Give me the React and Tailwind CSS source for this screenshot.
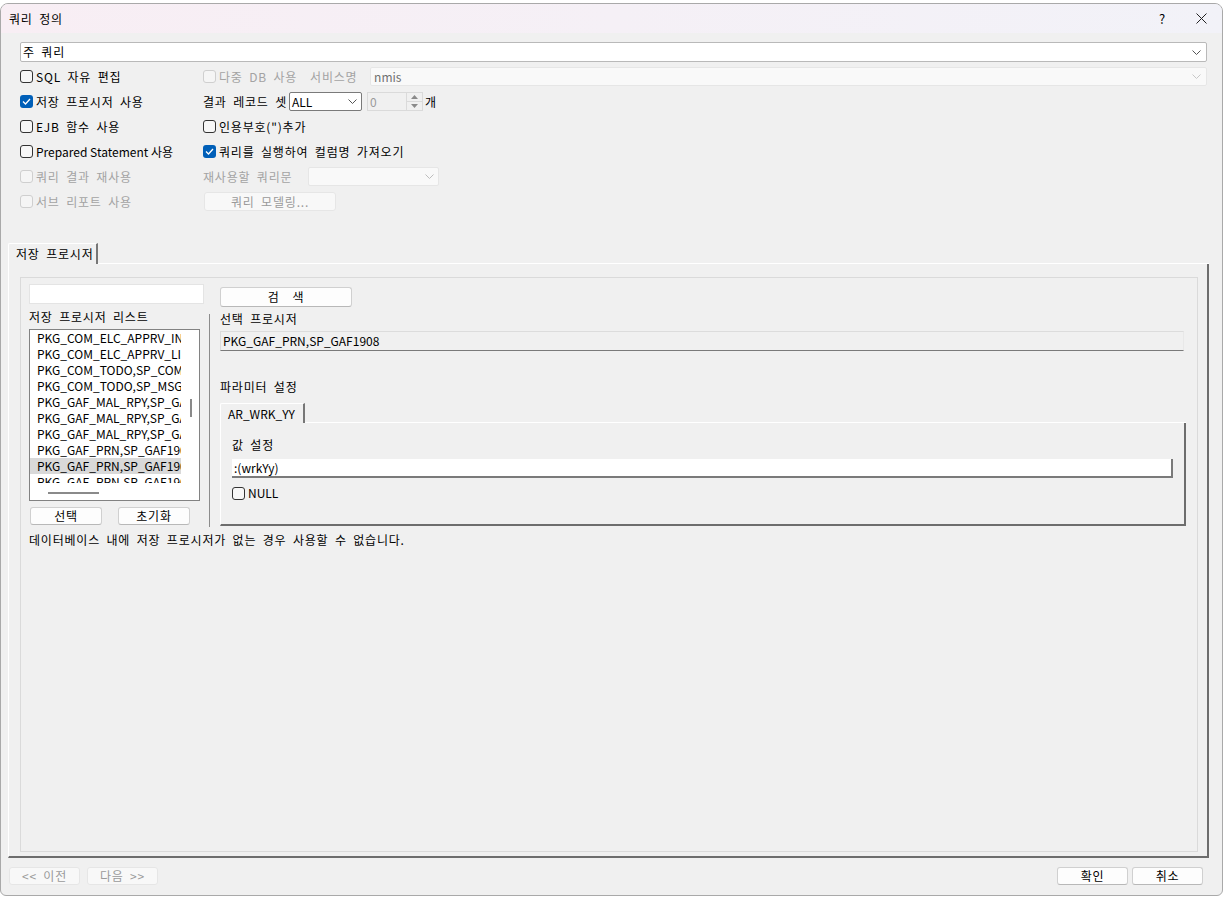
import React from "react";

const FONT = { fontFamily: '"Noto Sans CJK KR", "Noto Sans", sans-serif' };
// Korean labels in the reference are set wider than Noto's default metrics
const KO = "tracking-[0.8px] [word-spacing:3px]";

const PROCS = [
  "PKG_COM_ELC_APPRV_INFO",
  "PKG_COM_ELC_APPRV_LINE",
  "PKG_COM_TODO,SP_COM_TODO",
  "PKG_COM_TODO,SP_MSG_SEND",
  "PKG_GAF_MAL_RPY,SP_GAF1101",
  "PKG_GAF_MAL_RPY,SP_GAF1102",
  "PKG_GAF_MAL_RPY,SP_GAF1103",
  "PKG_GAF_PRN,SP_GAF1907",
  "PKG_GAF_PRN,SP_GAF1908",
  "PKG_GAF_PRN,SP_GAF1909",
];

function Chevron({ className = "" }) {
  return (
    <svg width="9" height="5" viewBox="0 0 9 5" className={className}>
      <path d="M0.5 0.5 L4.5 4.5 L8.5 0.5" fill="none" stroke="currentColor" strokeWidth="1" />
    </svg>
  );
}

function Check({ checked, disabled }) {
  if (checked) {
    return (
      <span className="w-[13px] h-[13px] rounded-[3px] bg-[#005fb8] flex items-center justify-center shrink-0">
        <svg width="9" height="7" viewBox="0 0 9 7">
          <path d="M1 3.5 L3.5 6 L8 1" fill="none" stroke="#fff" strokeWidth="1.3" />
        </svg>
      </span>
    );
  }
  return (
    <span
      className={
        "w-[13px] h-[13px] rounded-[3px] border shrink-0 " +
        (disabled ? "border-[#cfcfcf] bg-[#f5f5f5]" : "border-[#333] bg-[#f7f7f7]")
      }
    />
  );
}

function CheckLabel({ checked, disabled, ko, children }) {
  return (
    <label className={"flex items-center gap-[3px] " + (disabled ? "text-[#a3a3a3]" : "text-black")}>
      <Check checked={checked} disabled={disabled} />
      <span className={ko ? KO : ""}>{children}</span>
    </label>
  );
}

function Btn({ children, disabled, className = "" }) {
  return (
    <button
      type="button"
      className={
        "h-[18px] rounded-[3px] border flex items-center justify-center leading-none " +
        KO +
        " " +
        (disabled
          ? "bg-[#f8f8f8] border-[#e6e6e6] text-[#9a9a9a] "
          : "bg-[#fdfdfd] border-[#d0d0d0] border-b-[#b8b8b8] text-black ") +
        className
      }
    >
      {children}
    </button>
  );
}

export default function App() {
  return (
    <div className="w-[1225px] h-[897px] bg-white text-[12px] leading-[16px]" style={FONT}>
      <div className="mt-[3px] w-[1223px] h-[893px] border border-[#a9a9a9] rounded-t-[8px] rounded-b-[6px] overflow-hidden bg-[#f0f0f0] flex flex-col">
        {/* title bar */}
        <div className="h-[29px] shrink-0 flex items-center pl-[8px] bg-gradient-to-r from-[#f8eef4] to-[#f2f2f8]">
          <span className={"flex-1 text-[12px] text-black " + KO}>쿼리 정의</span>
          <span className="w-[20px] text-center text-[13px] mr-[24px]">?</span>
          <svg width="11" height="11" viewBox="0 0 11 11" className="mr-[15px]">
            <path d="M0.5 0.5 L10.5 10.5 M10.5 0.5 L0.5 10.5" stroke="#222" strokeWidth="1" />
          </svg>
        </div>

        {/* options */}
        <div className="pl-[19px] pr-[15px] pt-[9px]">
          <div className="h-[20px] bg-white border border-[#b9b9b9] rounded-[2px] flex items-center pl-[2px] pr-[5px]">
            <span className={"flex-1 " + KO}>주 쿼리</span>
            <Chevron className="text-[#555]" />
          </div>

          <div className="mt-[2px] flex flex-col">
            <div className="h-[25px] flex items-center">
              <div className="w-[183px]"><CheckLabel ko>SQL 자유 편집</CheckLabel></div>
              <CheckLabel disabled ko>다중 DB 사용</CheckLabel>
              <span className={"ml-[13px] w-[60px] text-[#a3a3a3] " + KO}>서비스명</span>
              <div className="flex-1 h-[19px] bg-[#f9f9f9] border border-[#e6e6e6] rounded-[2px] flex items-center pl-[3px] pr-[5px] text-[#707070]">
                <span className="flex-1">nmis</span>
                <Chevron className="text-[#c8c8c8]" />
              </div>
            </div>

            <div className="h-[25px] flex items-center">
              <div className="w-[183px]"><CheckLabel checked ko>저장 프로시저 사용</CheckLabel></div>
              <span className={"w-[86px] whitespace-nowrap " + KO}>결과 레코드 셋</span>
              <div className="w-[73px] h-[19px] bg-white border border-[#7a7a7a] rounded-[2px] flex items-center pl-[2px] pr-[4px]">
                <span className="flex-1">ALL</span>
                <Chevron className="text-[#555]" />
              </div>
              <div className="ml-[5px] w-[56px] h-[19px] bg-[#f0f0f0] border border-[#dadada] flex items-center text-[#9a9a9a]">
                <span className="flex-1 pl-[2px]">0</span>
                <div className="w-[16px] h-full border-l border-[#dadada] flex flex-col">
                  <div className="flex-1 flex items-center justify-center border-b border-[#dadada]">
                    <svg width="7" height="4" viewBox="0 0 7 4"><path d="M0 4 L3.5 0 L7 4Z" fill="#8a8a8a" /></svg>
                  </div>
                  <div className="flex-1 flex items-center justify-center">
                    <svg width="7" height="4" viewBox="0 0 7 4"><path d="M0 0 L3.5 4 L7 0Z" fill="#8a8a8a" /></svg>
                  </div>
                </div>
              </div>
              <span className="ml-[2px]">개</span>
            </div>

            <div className="h-[25px] flex items-center">
              <div className="w-[183px]"><CheckLabel ko>EJB 함수 사용</CheckLabel></div>
              <CheckLabel ko>인용부호(")추가</CheckLabel>
            </div>

            <div className="h-[25px] flex items-center">
              <div className="w-[183px]"><CheckLabel>Prepared Statement 사용</CheckLabel></div>
              <CheckLabel checked ko>쿼리를 실행하여 컬럼명 가져오기</CheckLabel>
            </div>

            <div className="h-[25px] flex items-center">
              <div className="w-[183px]"><CheckLabel disabled ko>쿼리 결과 재사용</CheckLabel></div>
              <span className={"w-[105px] text-[#a3a3a3] whitespace-nowrap " + KO}>재사용할 쿼리문</span>
              <div className="w-[131px] h-[19px] bg-[#f9f9f9] border border-[#e6e6e6] rounded-[2px] flex items-center justify-end pr-[4px]">
                <Chevron className="text-[#bdbdbd]" />
              </div>
            </div>

            <div className="h-[25px] flex items-center">
              <div className="w-[184px]"><CheckLabel disabled ko>서브 리포트 사용</CheckLabel></div>
              <Btn disabled className="w-[132px] !h-[19px]">쿼리 모델링...</Btn>
            </div>
          </div>
        </div>

        {/* tab area */}
        <div className="mt-[29px] ml-[7px] mr-[13px] flex flex-col">
          <div className="flex items-end">
            <div className={"h-[21px] w-[90px] border-t border-l border-white border-r-2 border-r-[#777] rounded-tl-[2px] flex items-center pl-[7px] " + KO}>
              저장 프로시저
            </div>
            <div className="flex-1 border-b border-white" />
          </div>
          <div className="h-[594px] border-l border-white border-r-2 border-r-[#6d6d6d] border-b-2 border-b-[#6d6d6d] pt-[13px] pl-[11px] pr-[9px] pb-[4px] flex">
            <div className="flex-1 border border-[#dadada] pl-[8px] pt-[6px] pr-[11px] flex flex-col">
              <div className="flex">
                {/* left column */}
                <div className="w-[175px] flex flex-col">
                  <div className="h-[20px] bg-white border border-[#e4e4e4]" />
                  <div className={"h-[25px] flex items-center " + KO}>저장 프로시저 리스트</div>
                  <div className="w-[171px] h-[172px] bg-white border border-[#828282] relative">
                    <div className="w-[151px] h-[153px] overflow-hidden">
                      {PROCS.map((p, i) => (
                        <div
                          key={p}
                          className={"h-[16px] pl-[7px] whitespace-nowrap leading-[16px] " + (i === 8 ? "bg-[#d9d9d9]" : "")}
                        >
                          {p}
                        </div>
                      ))}
                    </div>
                    <div className="absolute left-[160px] top-[69px] w-[2px] h-[18px] bg-[#8a8a8a]" />
                    <div className="absolute left-[18px] top-[162px] w-[51px] h-[2px] bg-[#8a8a8a]" />
                  </div>
                  <div className="mt-[6px] flex gap-[16px] pl-[1px]">
                    <Btn className="w-[72px]">선택</Btn>
                    <Btn className="w-[72px]">초기화</Btn>
                  </div>
                </div>

                <div className="ml-[5px] mt-[30px] w-px h-[213px] bg-[#8c8c8c]" />

                {/* right column */}
                <div className="ml-[10px] flex-1 flex flex-col">
                  <Btn className="mt-[3px] w-[132px] !h-[20px]">검&nbsp;&nbsp;색</Btn>
                  <div className={"h-[24px] flex items-center " + KO}>선택 프로시저</div>
                  <div className="mr-[2px] h-[20px] border border-[#dcdcdc] border-b-[#7a7a7a] border-r-[#e8e8e8] flex items-center pl-[2px]">
                    PKG_GAF_PRN,SP_GAF1908
                  </div>
                  <div className={"mt-[28px] h-[16px] flex items-center " + KO}>파라미터 설정</div>
                  <div className="mt-[8px] flex items-end">
                    <div className="h-[20px] w-[85px] border-t border-l border-white border-r-2 border-r-[#777] rounded-tl-[2px] flex items-center pl-[7px]">
                      AR_WRK_YY
                    </div>
                    <div className="flex-1 border-b border-white" />
                  </div>
                  <div className="h-[103px] border-l border-white border-r-2 border-r-[#6d6d6d] border-b-2 border-b-[#6d6d6d] pl-[11px] pr-[11px] pt-[14px] flex flex-col">
                    <div className={"h-[16px] flex items-center " + KO}>값 설정</div>
                    <div className="mt-[6px] h-[19px] bg-white border-b-2 border-r-2 border-[#7a7a7a] flex items-center pl-[2px]">
                      :(wrkYy)
                    </div>
                    <div className="mt-[7px]">
                      <CheckLabel>NULL</CheckLabel>
                    </div>
                  </div>
                </div>
              </div>
              <div className={"mt-[5px] h-[16px] flex items-center " + KO}>
                데이터베이스 내에 저장 프로시저가 없는 경우 사용할 수 없습니다.
              </div>
            </div>
          </div>
        </div>

        {/* footer */}
        <div className="mt-[9px] flex items-center pl-[8px] pr-[19px]">
          <div className="flex gap-[7px]">
            <Btn disabled className="w-[71px]">&lt;&lt; 이전</Btn>
            <Btn disabled className="w-[71px]">다음 &gt;&gt;</Btn>
          </div>
          <div className="flex-1" />
          <div className="flex gap-[4px]">
            <Btn className="w-[71px]">확인</Btn>
            <Btn className="w-[71px]">취소</Btn>
          </div>
        </div>
      </div>
    </div>
  );
}
